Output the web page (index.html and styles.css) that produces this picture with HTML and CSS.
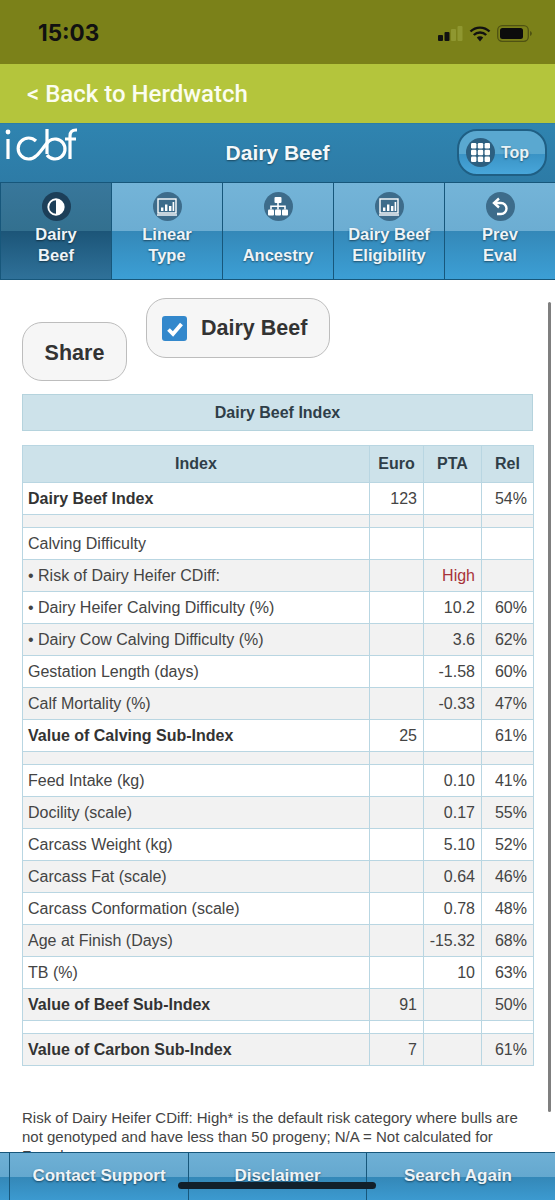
FILE: index.html
```html
<!DOCTYPE html>
<html lang="en">
  <head>
    <meta charset="UTF-8" />
    <meta name="viewport" content="width=device-width, initial-scale=1.0" />
    <title>Dairy Beef</title>
    <link rel="stylesheet" href="styles.css">
  </head>
  <body>
    <div class="status-bar">
      <span class="clock">15:03</span>
      <div class="status-icons">
        <svg width="25" height="15" viewBox="0 0 25 15">
          <rect x="0" y="9" width="5" height="6" rx="1" fill="#111"/>
          <rect x="6.5" y="6" width="5" height="9" rx="1" fill="#111"/>
          <rect x="13" y="3" width="5" height="12" rx="1" fill="#8f9730"/>
          <rect x="19.5" y="0" width="5" height="15" rx="1" fill="#8f9730"/>
        </svg>
        <svg width="22" height="16" viewBox="0 0 22 16">
          <path d="M1.5 5.5a13.5 13.5 0 0 1 19 0M4.8 9a8.8 8.8 0 0 1 12.4 0" fill="none" stroke="#111" stroke-width="2.4"/>
          <path d="M7.8 11.6a4.6 4.6 0 0 1 6.4 0L11 15.4z" fill="#111"/>
        </svg>
        <svg width="35" height="17" viewBox="0 0 35 17">
          <rect x="0.7" y="0.7" width="30.6" height="15.6" rx="4.5" fill="none" stroke="#4f5212" stroke-width="1.3"/>
          <rect x="3" y="3" width="23" height="11" rx="2.5" fill="#0c0c0c"/>
          <path d="M33 6v5a2.6 2.6 0 0 0 0-5z" fill="#4f5212"/>
        </svg>
      </div>
    </div>

    <div class="back-bar">&lt; Back to Herdwatch</div>

    <header class="top-header">
      <svg class="logo" width="74" height="34" viewBox="0 0 74 34">
        <g fill="none" stroke="#fff" stroke-width="3.2">
          <path d="M3 11v20"/>
          <path d="M31 13a10.5 10.5 0 1 0 0 15C35 25 39 18 44 13a10 10 0 1 1-2 14"/>
          <path d="M42 1v25"/>
          <path d="M72 2h-1c-4 0-6 2-6 6v23M60 11h11"/>
        </g>
        <circle cx="3" cy="4" r="2.4" fill="#fff"/>
      </svg>
      <h1 class="page-title">Dairy Beef</h1>
      <div class="top-button">
        <span class="icon-circle">
          <svg width="19" height="19" viewBox="0 0 19 19" fill="#fff">
            <rect x="0" y="0" width="5.4" height="5.4" rx="1.2"/><rect x="6.8" y="0" width="5.4" height="5.4" rx="1.2"/><rect x="13.6" y="0" width="5.4" height="5.4" rx="1.2"/>
            <rect x="0" y="6.8" width="5.4" height="5.4" rx="1.2"/><rect x="6.8" y="6.8" width="5.4" height="5.4" rx="1.2"/><rect x="13.6" y="6.8" width="5.4" height="5.4" rx="1.2"/>
            <rect x="0" y="13.6" width="5.4" height="5.4" rx="1.2"/><rect x="6.8" y="13.6" width="5.4" height="5.4" rx="1.2"/><rect x="13.6" y="13.6" width="5.4" height="5.4" rx="1.2"/>
          </svg>
        </span>
        <span>Top</span>
      </div>
    </header>

    <nav class="tabs">
      <div class="tab active">
        <span class="icon-circle dark">
          <svg width="18" height="18" viewBox="0 0 18 18">
            <circle cx="9" cy="9" r="7.7" fill="none" stroke="#fff" stroke-width="1.9"/>
            <path d="M9 1.3a7.7 7.7 0 0 1 0 15.4z" fill="#fff"/>
          </svg>
        </span>
        <span class="tab-label">Dairy<br>Beef</span>
      </div>
      <div class="tab">
        <span class="icon-circle">
          <svg width="20" height="18" viewBox="0 0 20 18">
            <rect x="1" y="1" width="18" height="14" fill="none" stroke="#fff" stroke-width="1.4"/>
            <path d="M0 17h20" stroke="#fff" stroke-width="1.4"/>
            <path d="M4 9.5h2.4V13H4zM8 6.5h2.4V13H8zM12 8h2.4v5H12zM15.6 4h1.6v9h-1.6z" fill="#fff"/>
          </svg>
        </span>
        <span class="tab-label">Linear<br>Type</span>
      </div>
      <div class="tab">
        <span class="icon-circle">
          <svg width="20" height="19" viewBox="0 0 20 19" fill="#fff">
            <rect x="6.5" y="0" width="7" height="6" rx="1"/>
            <rect x="0" y="12.5" width="6" height="6" rx="1"/>
            <rect x="7" y="12.5" width="6" height="6" rx="1"/>
            <rect x="14" y="12.5" width="6" height="6" rx="1"/>
            <path d="M9.2 6h1.6v2.5H17.8v4h-1.6V10H10.8v2.5H9.2V10H3.8v2.5H2.2v-4H9.2z"/>
          </svg>
        </span>
        <span class="tab-label">Ancestry</span>
      </div>
      <div class="tab">
        <span class="icon-circle">
          <svg width="20" height="18" viewBox="0 0 20 18">
            <rect x="1" y="1" width="18" height="14" fill="none" stroke="#fff" stroke-width="1.4"/>
            <path d="M0 17h20" stroke="#fff" stroke-width="1.4"/>
            <path d="M4 9.5h2.4V13H4zM8 6.5h2.4V13H8zM12 8h2.4v5H12zM15.6 4h1.6v9h-1.6z" fill="#fff"/>
          </svg>
        </span>
        <span class="tab-label">Dairy Beef<br>Eligibility</span>
      </div>
      <div class="tab">
        <span class="icon-circle">
          <svg width="18" height="20" viewBox="0 0 18 20">
            <path d="M5 6h5a5 5 0 0 1 0 11H6" fill="none" stroke="#fff" stroke-width="2.4"/>
            <path d="M8 1.5L3 6l5 4.5" fill="none" stroke="#fff" stroke-width="2.4"/>
          </svg>
        </span>
        <span class="tab-label">Prev<br>Eval</span>
      </div>
    </nav>

    <main class="content">
      <div class="scrollbar"></div>
      <div class="actions">
        <div class="pill share">Share</div>
        <label class="pill check">
          <span class="checkbox">
            <svg width="18" height="16" viewBox="0 0 18 16">
              <path d="M2.5 8.5l4.5 4.5L15.5 3" fill="none" stroke="#fff" stroke-width="3.8"/>
            </svg>
          </span>
          Dairy Beef
        </label>
      </div>

      <div class="section-title">Dairy Beef Index</div>

      <table class="index-table">
        <colgroup>
          <col class="col-name">
          <col class="col-euro">
          <col class="col-pta">
          <col class="col-rel">
        </colgroup>
        <thead>
          <tr><th>Index</th><th>Euro</th><th>PTA</th><th>Rel</th></tr>
        </thead>
        <tbody>
          <tr class="total"><td>Dairy Beef Index</td><td>123</td><td></td><td>54%</td></tr>
          <tr class="spacer"><td></td><td></td><td></td><td></td></tr>
          <tr><td>Calving Difficulty</td><td></td><td></td><td></td></tr>
          <tr><td>&bull; Risk of Dairy Heifer CDiff:</td><td></td><td class="risk">High</td><td></td></tr>
          <tr><td>&bull; Dairy Heifer Calving Difficulty (%)</td><td></td><td>10.2</td><td>60%</td></tr>
          <tr><td>&bull; Dairy Cow Calving Difficulty (%)</td><td></td><td>3.6</td><td>62%</td></tr>
          <tr><td>Gestation Length (days)</td><td></td><td>-1.58</td><td>60%</td></tr>
          <tr><td>Calf Mortality (%)</td><td></td><td>-0.33</td><td>47%</td></tr>
          <tr class="total"><td>Value of Calving Sub-Index</td><td>25</td><td></td><td>61%</td></tr>
          <tr class="spacer"><td></td><td></td><td></td><td></td></tr>
          <tr><td>Feed Intake (kg)</td><td></td><td>0.10</td><td>41%</td></tr>
          <tr><td>Docility (scale)</td><td></td><td>0.17</td><td>55%</td></tr>
          <tr><td>Carcass Weight (kg)</td><td></td><td>5.10</td><td>52%</td></tr>
          <tr><td>Carcass Fat (scale)</td><td></td><td>0.64</td><td>46%</td></tr>
          <tr><td>Carcass Conformation (scale)</td><td></td><td>0.78</td><td>48%</td></tr>
          <tr><td>Age at Finish (Days)</td><td></td><td>-15.32</td><td>68%</td></tr>
          <tr><td>TB (%)</td><td></td><td>10</td><td>63%</td></tr>
          <tr class="total"><td>Value of Beef Sub-Index</td><td>91</td><td></td><td>50%</td></tr>
          <tr class="spacer"><td></td><td></td><td></td><td></td></tr>
          <tr class="total"><td>Value of Carbon Sub-Index</td><td>7</td><td></td><td>61%</td></tr>
        </tbody>
      </table>

      <p class="note">Risk of Dairy Heifer CDiff: High* is the default risk category where bulls are not genotyped and have less than 50 progeny; N/A = Not calculated for Females</p>
    </main>

    <footer class="bottom-bar">
      <div class="foot-item"></div>
      <div class="foot-item">Contact Support</div>
      <div class="foot-item">Disclaimer</div>
      <div class="foot-item last">Search Again</div>
      <div class="home-indicator"></div>
    </footer>
  </body>
</html>
```

FILE: styles.css
```css
* {
  margin: 0;
  padding: 0;
  box-sizing: border-box;
}

body {
  display: flex;
  flex-direction: column;
  height: 1200px;
  overflow: hidden;
  background: #fff;
  font-family: "Liberation Sans", Arial, sans-serif;
  color: #333;
}

.status-bar {
  height: 64px;
  flex-shrink: 0;
  display: flex;
  align-items: center;
  justify-content: space-between;
  padding: 0 23px 0 38px;
  background: #7b8119;
}

.clock {
  font-family: Inter, sans-serif;
  font-size: 22.5px;
  font-weight: 700;
  color: #111;
}

.status-icons {
  display: flex;
  align-items: center;
  gap: 6px;
  margin-top: 3px;
}

.back-bar {
  height: 59px;
  flex-shrink: 0;
  display: flex;
  align-items: center;
  padding-left: 27px;
  background: #b4c53c;
  color: #fbfdf0;
  font-family: Roboto, sans-serif;
  font-size: 24px;
  font-weight: 500;
}

.top-header {
  position: relative;
  height: 59px;
  flex-shrink: 0;
  display: flex;
  align-items: center;
  justify-content: center;
  background: linear-gradient(#2f84b0, #2d7ba6);
  border-top: 1px solid #2b7da8;
}

.logo {
  position: absolute;
  left: 5px;
  top: 4px;
}

.page-title {
  font-size: 21px;
  font-weight: 700;
  color: #f4f8fa;
  text-shadow: 0 1px 2px rgba(0, 0, 0, 0.45);
}

.top-button {
  position: absolute;
  right: 8px;
  top: 5px;
  width: 90px;
  height: 47px;
  display: flex;
  align-items: center;
  gap: 6px;
  padding-left: 7px;
  border: 2px solid #1f5f84;
  border-radius: 20px;
  background: linear-gradient(#5aa8d0 54%, #3a93c5 54%, #48a6da);
  color: #e8f2f6;
  font-size: 16px;
  font-weight: 700;
  text-shadow: 0 1px 2px rgba(0, 0, 0, 0.45);
}

.icon-circle {
  width: 29px;
  height: 29px;
  flex-shrink: 0;
  display: flex;
  align-items: center;
  justify-content: center;
  border-radius: 50%;
  background: #3d6c8b;
}

.top-button .icon-circle {
  background: #2c5f80;
}

.icon-circle.dark {
  background: #1c3f59;
}

.tabs {
  height: 98px;
  flex-shrink: 0;
  display: grid;
  grid-template-columns: repeat(5, 1fr);
  border-top: 1px solid #17577b;
  border-bottom: 1px solid #17577b;
}

.tab {
  display: flex;
  flex-direction: column;
  align-items: center;
  padding-top: 9px;
  border-left: 1px solid #17577b;
  background: linear-gradient(#74b4d8 0, #6cadd2 50%, #3488b8 50%, #3c9fd5 100%);
  color: #eef4f8;
  font-size: 16.5px;
  font-weight: 700;
  text-shadow: 0 1px 2px rgba(0, 0, 0, 0.5);
}

.tab.active {
  background: linear-gradient(#38779b 0, #33708f 50%, #1c5578 50%, #2f7199 100%);
}

.tab-label {
  flex: 1;
  display: flex;
  align-items: flex-end;
  text-align: center;
  line-height: 21px;
  padding-bottom: 13px;
}

.content {
  position: relative;
  flex: 1;
  min-height: 0;
  overflow: hidden;
  padding: 18px 22px 0;
}

.scrollbar {
  position: absolute;
  right: 4px;
  top: 22px;
  width: 3px;
  height: 810px;
  border-radius: 2px;
  background: #7f7f7f;
}

.actions {
  height: 83px;
  display: flex;
  align-items: flex-end;
  gap: 19px;
  margin-bottom: 13px;
}

.pill {
  display: flex;
  align-items: center;
  border: 1px solid #bdbdbd;
  border-radius: 20px;
  background: #f6f6f6;
  color: #333;
  font-size: 21.5px;
  font-weight: 700;
}

.share {
  width: 105px;
  height: 59px;
  padding-top: 3px;
  justify-content: center;
}

.check {
  align-self: flex-start;
  width: 184px;
  height: 60px;
  gap: 14px;
  padding: 1px 0 0 15px;
}

.checkbox {
  width: 25px;
  height: 25px;
  display: flex;
  align-items: center;
  justify-content: center;
  border-radius: 3px;
  background: #3388cc;
}

.section-title {
  height: 37px;
  display: flex;
  align-items: center;
  justify-content: center;
  border: 1px solid #b5d3dd;
  background: #cde2ea;
  color: #2f3e48;
  font-size: 16px;
  font-weight: 700;
}

.index-table {
  width: 511px;
  margin-top: 14px;
  table-layout: fixed;
  border-collapse: collapse;
  font-size: 16px;
}

.col-name {
  width: 347px;
}

.col-euro {
  width: 54px;
}

.col-pta {
  width: 58px;
}

.col-rel {
  width: 52px;
}

.index-table th,
.index-table td {
  border: 1px solid #b9d6e2;
}

.index-table th {
  height: 37px;
  background: #cde2ea;
  color: #2f3e48;
  font-size: 16px;
  font-weight: 700;
  text-align: center;
}

.index-table td {
  height: 32px;
  padding: 0 6px 0 5px;
  text-align: right;
  color: #444;
}

.index-table td:first-child {
  text-align: left;
}

.index-table tbody tr:nth-child(even) td {
  background: #f2f2f2;
}

.index-table .total td:first-child {
  font-weight: 700;
  color: #333;
}

.index-table .spacer td {
  height: 13px;
}

.index-table .risk {
  color: #a8323a;
}

.note {
  margin-top: 42px;
  font-size: 15px;
  line-height: 19px;
  color: #444;
}

.bottom-bar {
  position: relative;
  height: 48px;
  flex-shrink: 0;
  display: grid;
  grid-template-columns: 10px 179px 178px 1fr;
  border-top: 1px solid #17577b;
  background: linear-gradient(#6fb0d5 0, #64a8cf 52%, #3488b8 52%, #3c9ad0 100%);
}

.foot-item {
  display: flex;
  align-items: center;
  justify-content: center;
  padding-bottom: 2px;
  border-right: 1px solid #17577b;
  color: #eef4f8;
  font-size: 17px;
  font-weight: 700;
  text-shadow: 0 1px 2px rgba(0, 0, 0, 0.5);
}

.foot-item.last {
  padding-right: 6px;
  border-right: none;
}

.home-indicator {
  position: absolute;
  left: 178px;
  bottom: 11px;
  width: 198px;
  height: 7px;
  border-radius: 4px;
  background: #12202b;
}
```
